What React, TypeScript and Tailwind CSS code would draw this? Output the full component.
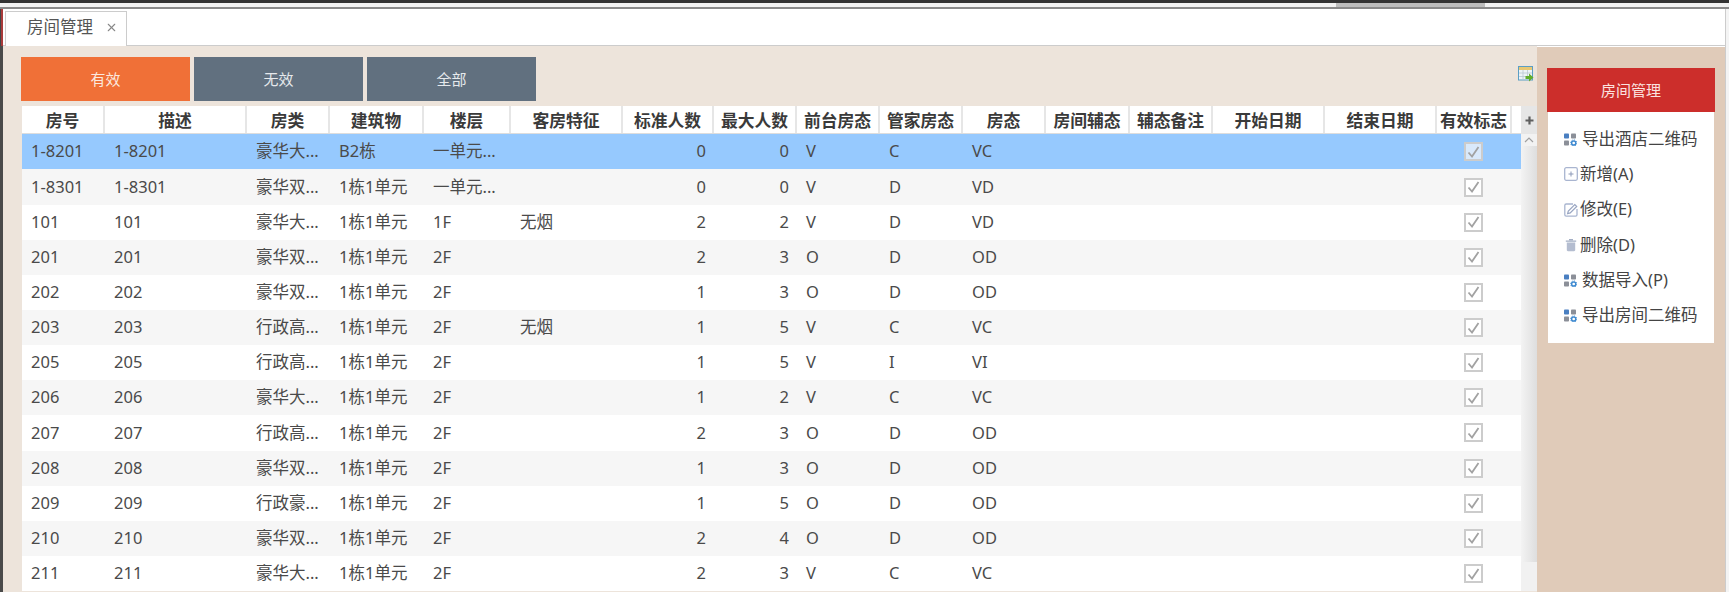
import { X } from "lucide-react";

const columns = [
  { label: "房号", key: "no" },
  { label: "描述", key: "desc" },
  { label: "房类", key: "type" },
  { label: "建筑物", key: "building" },
  { label: "楼层", key: "floor" },
  { label: "客房特征", key: "feature" },
  { label: "标准人数", key: "std", right: true },
  { label: "最大人数", key: "max", right: true },
  { label: "前台房态", key: "front" },
  { label: "管家房态", key: "house" },
  { label: "房态", key: "state" },
  { label: "房间辅态", key: "aux" },
  { label: "辅态备注", key: "note" },
  { label: "开始日期", key: "start" },
  { label: "结束日期", key: "end" },
];

type Room = Record<string, string>;

const room = (
  no: string,
  type: string,
  building: string,
  floor: string,
  feature: string,
  std: string,
  max: string,
  front: string,
  house: string,
): Room => ({
  no,
  desc: no,
  type,
  building,
  floor,
  feature,
  std,
  max,
  front,
  house,
  state: front + house,
});

const rooms = [
  room("1-8201", "豪华大...", "B2栋", "一单元...", "", "0", "0", "V", "C"),
  room("1-8301", "豪华双...", "1栋1单元", "一单元...", "", "0", "0", "V", "D"),
  room("101", "豪华大...", "1栋1单元", "1F", "无烟", "2", "2", "V", "D"),
  room("201", "豪华双...", "1栋1单元", "2F", "", "2", "3", "O", "D"),
  room("202", "豪华双...", "1栋1单元", "2F", "", "1", "3", "O", "D"),
  room("203", "行政高...", "1栋1单元", "2F", "无烟", "1", "5", "V", "C"),
  room("205", "行政高...", "1栋1单元", "2F", "", "1", "5", "V", "I"),
  room("206", "豪华大...", "1栋1单元", "2F", "", "1", "2", "V", "C"),
  room("207", "行政高...", "1栋1单元", "2F", "", "2", "3", "O", "D"),
  room("208", "豪华双...", "1栋1单元", "2F", "", "1", "3", "O", "D"),
  room("209", "行政豪...", "1栋1单元", "2F", "", "1", "5", "O", "D"),
  room("210", "豪华双...", "1栋1单元", "2F", "", "2", "4", "O", "D"),
  room("211", "豪华大...", "1栋1单元", "2F", "", "2", "3", "V", "C"),
];

const gridCols =
  "grid grid-cols-[83px_142px_83px_94px_87px_112px_91px_83px_83px_83px_83px_84px_83px_112px_112px_75px_9px]";

function AppsIcon() {
  return (
    <svg width="13" height="13" viewBox="0 0 13 13" className="shrink-0">
      <rect x="0" y="0.5" width="5" height="5" rx="0.8" fill="#4a7fc1" />
      <rect x="7" y="0.5" width="5" height="5" rx="0.8" fill="#8b8f98" />
      <rect x="0" y="7.5" width="5" height="5" rx="0.8" fill="#8b8f98" />
      <circle cx="9.7" cy="10" r="2.1" fill="none" stroke="#3f8ad0" strokeWidth="1.5" />
      <circle cx="9.7" cy="10" r="3.1" fill="none" stroke="#3f8ad0" strokeWidth="0.9" strokeDasharray="1.2 1.2" />
    </svg>
  );
}

function PlusBoxIcon() {
  return (
    <svg width="14" height="14" viewBox="0 0 14 14" className="shrink-0">
      <rect x="0.7" y="0.7" width="12.6" height="12.6" rx="1.5" fill="none" stroke="#a9b5d0" strokeWidth="1.3" />
      <path d="M7 4.5v5M4.5 7h5" stroke="#8c99b8" strokeWidth="1" />
    </svg>
  );
}

function EditBoxIcon() {
  return (
    <svg width="14" height="14" viewBox="0 0 14 14" className="shrink-0">
      <path d="M9 1H2.2C1.4 1 .8 1.6.8 2.4v9.4c0 .8.6 1.4 1.4 1.4h9.4c.8 0 1.4-.6 1.4-1.4V6" fill="none" stroke="#a9b5d0" strokeWidth="1.3" />
      <path d="M3.6 10.6l.7-2.6L10.8 1.5l1.9 1.9-6.5 6.5z" fill="none" stroke="#98a5c2" strokeWidth="1.2" />
    </svg>
  );
}

function TrashIcon() {
  return (
    <svg width="12" height="14" viewBox="0 0 12 14" className="shrink-0">
      <path d="M4 1.6h4M.8 3.2h10.4" stroke="#a3aec4" strokeWidth="1.3" />
      <path d="M1.8 4.6h8.4v7.4c0 .7-.5 1.2-1.2 1.2H3c-.7 0-1.2-.5-1.2-1.2z" fill="#b4bdd0" />
    </svg>
  );
}

function ExportTableIcon() {
  return (
    <svg width="16" height="16" viewBox="0 0 16 16">
      <rect x="0.5" y="0.5" width="14" height="13.5" fill="#eef4f8" stroke="#5b9ec4" />
      <rect x="1" y="1" width="13" height="3" fill="#e8c873" />
      <path d="M1 7h13M1 10.5h9M5 4v10M9.5 4v6" stroke="#b9c8d2" strokeWidth="0.8" />
      <path d="M7.5 10h3.5V7.5l4.5 4-4.5 4V13H7.5z" fill="#62ad2d" />
    </svg>
  );
}

function CheckCell({ selected }: { selected: boolean }) {
  return (
    <div className="flex items-center justify-center pr-[3px]">
      <div
        className={`flex h-[19px] w-[19px] items-center justify-center border-2 border-[#cccccc] ${
          selected ? "bg-[#d9e9fb]" : "bg-white"
        }`}
      >
        <svg width="13" height="12" viewBox="0 0 13 12">
          <path d="M1.5 6.5l3.5 4 6.5-9.5" fill="none" stroke="#a2a2a2" strokeWidth="1.8" />
        </svg>
      </div>
    </div>
  );
}

const menuItems = [
  { label: "导出酒店二维码", icon: <AppsIcon />, gap: "gap-[5px]" },
  { label: "新增(A)", icon: <PlusBoxIcon />, gap: "gap-[2px]" },
  { label: "修改(E)", icon: <EditBoxIcon />, gap: "gap-[2px]" },
  { label: "删除(D)", icon: <TrashIcon />, gap: "gap-[3px] pl-[1px]" },
  { label: "数据导入(P)", icon: <AppsIcon />, gap: "gap-[5px]" },
  { label: "导出房间二维码", icon: <AppsIcon />, gap: "gap-[5px]" },
];

export default function App() {
  return (
    <div className="flex h-[592px] w-[1729px] flex-col overflow-hidden bg-white font-['Noto_Sans','Noto_Sans_CJK_SC',sans-serif] text-[16.5px] text-[#4a4a4a]">
      <div className="h-[3px] bg-[#333333]" />
      <div className="flex h-[4px] bg-[#f2f2f2]">
        <div className="w-[1336px]" />
        <div className="w-[149px] bg-[#bdbdbd]" />
      </div>
      <div className="h-[2px] bg-[#8a8a8a]" />

      <div className="flex min-h-0 flex-1">
        <div className="flex w-[3px] flex-col">
          <div className="h-[37px] border-l border-[#444444] bg-[#a83a3a]" />
          <div className="flex-1 bg-[#4a4a4a]" />
        </div>

        <div className="flex min-w-0 flex-1 flex-col">
          <div className="flex h-[37px] border-b border-[#cccccc] pl-[2px] pt-[2px]">
            <div className="-mb-px flex w-[122px] items-center border-x border-t border-[#cccccc] bg-white pb-[3px] pl-[21px]">
              <span className="text-[16.5px] text-[#555555]">房间管理</span>
              <X size={13} strokeWidth={2} className="ml-[12px] text-[#888888]" />
            </div>
          </div>

          <div className="flex min-h-0 flex-1">
            <div className="w-[1534px] bg-[#ede4db] pl-[18px] pt-[11px]">
              <div className="flex h-[44px] items-stretch gap-[4px]">
                <div className="flex w-[169px] items-center justify-center bg-[#f07037] text-[15px] text-[#fbe9df]">有效</div>
                <div className="flex w-[169px] items-center justify-center bg-[#61707f] text-[15px] text-[#e6e9ec]">无效</div>
                <div className="flex w-[169px] items-center justify-center bg-[#61707f] text-[15px] text-[#e6e9ec]">全部</div>
                <div className="ml-auto pr-[3px] pt-[9px]">
                  <ExportTableIcon />
                </div>
              </div>

              <div className="mt-[5px] ml-px flex">
                <div className="w-[1499px] shrink-0">
                  <div className={`${gridCols} h-[28.3px] border-b border-[#dddddd] bg-white`}>
                    {columns.map((col) => (
                      <div
                        key={col.key}
                        className="flex items-center justify-center border-r-2 border-[#e6e6e6] pt-[2px] text-[16.8px] font-bold text-[#3a3a3a]"
                      >
                        {col.label}
                      </div>
                    ))}
                    <div className="flex items-center justify-center border-r-2 border-[#e6e6e6] pt-[2px] text-[16.8px] font-bold text-[#3a3a3a]">
                      有效标志
                    </div>
                    <div />
                  </div>

                  {rooms.map((row, i) => (
                    <div
                      key={row.no}
                      className={`${gridCols} h-[35.15px] ${
                        i === 0 ? "bg-[#96c9fe]" : i % 2 === 1 ? "bg-[#f6f6f6]" : "bg-white"
                      }`}
                    >
                      {columns.map((col) => (
                        <div
                          key={col.key}
                          className={`flex items-center whitespace-nowrap pl-[9px] ${
                            col.right ? "justify-end pr-[8px]" : "pr-[9px]"
                          }`}
                        >
                          {row[col.key]}
                        </div>
                      ))}
                      <CheckCell selected={i === 0} />
                      <div />
                    </div>
                  ))}
                </div>

                <div className="flex w-[16px] shrink-0 flex-col bg-[#f1f1f1]">
                  <div className="flex h-[28px] items-center justify-center bg-[#e6e6e6]">
                    <svg width="9" height="9" viewBox="0 0 9 9">
                      <path d="M4.5 .5v8M.5 4.5h8" stroke="#5f5f5f" strokeWidth="2.2" />
                    </svg>
                  </div>
                  <div className="flex h-[12px] items-center justify-center bg-[#f2f2f2]">
                    <svg width="10" height="6" viewBox="0 0 10 6">
                      <path d="M1 5l4-4 4 4" fill="none" stroke="#a0a0a0" strokeWidth="1.2" />
                    </svg>
                  </div>
                  <div className="h-[416px] bg-gradient-to-r from-[#f3f3f3] to-[#dedede]" />
                </div>
              </div>
            </div>

            <div className="mt-px flex-1 bg-[#e0cbb9] pl-[10px] pr-[10px] pt-[21px]">
              <div className="flex h-[44px] items-center justify-center bg-[#cc2e2b] text-[15px] text-[#fbe3e0]">
                房间管理
              </div>
              <div className="mx-px bg-white pb-[9.5px] pl-[16px] pt-[9.5px]">
                {menuItems.map((item) => (
                  <div key={item.label} className={`flex h-[35.3px] items-center ${item.gap}`}>
                    {item.icon}
                    <span className="whitespace-nowrap text-[16.5px] text-[#444444]">{item.label}</span>
                  </div>
                ))}
              </div>
            </div>
          </div>
        </div>

        <div className="w-[4px] border-l border-[#cccccc] bg-[#f4f4f4]" />
      </div>
    </div>
  );
}
